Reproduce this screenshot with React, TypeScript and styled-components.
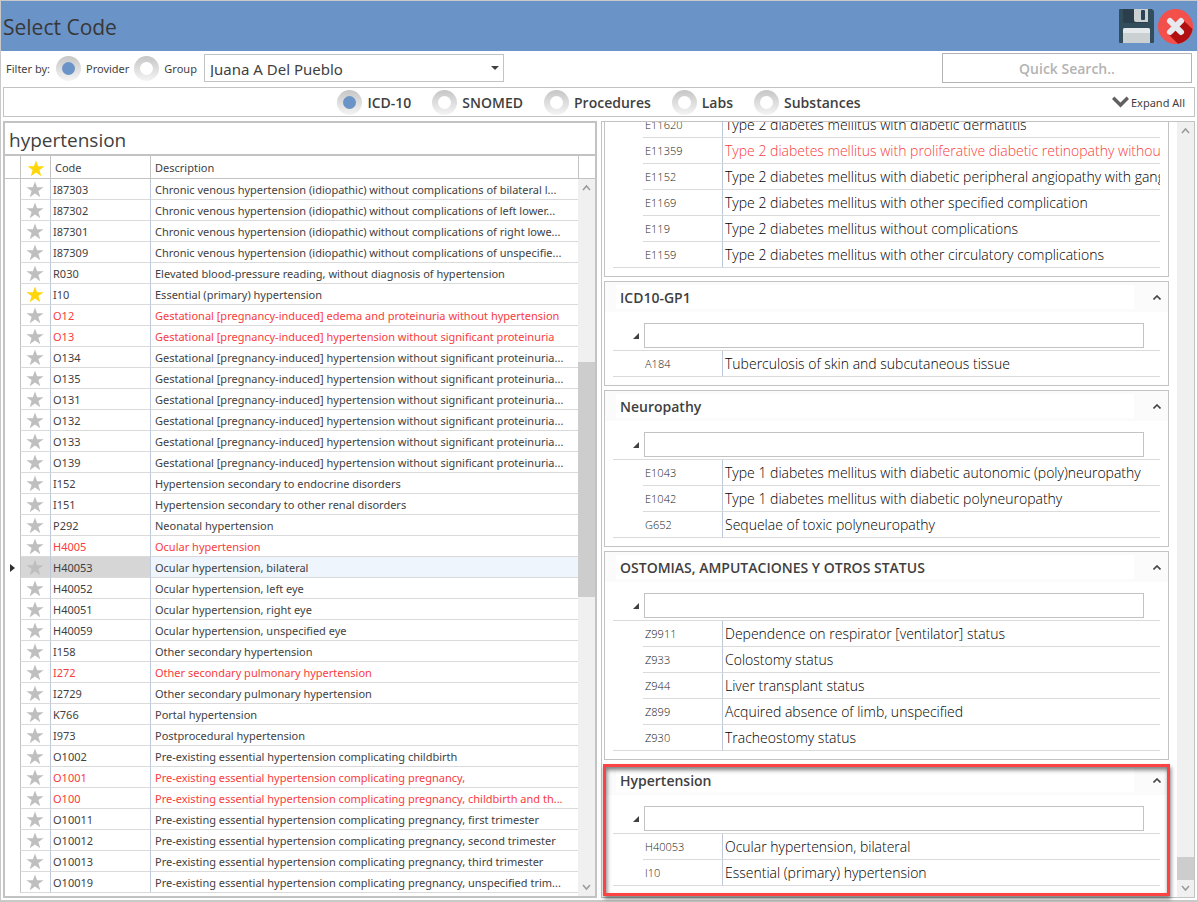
import React, { useState } from 'react';
import styled, { createGlobalStyle, css } from 'styled-components';

const color = {
  blue: '#6a93c7',
  line: '#c3c3c3',
  rowLine: '#dadada',
  colLine: '#bdc9da',
  text: '#3f3f3f',
  red: '#f83c3c',
  track: '#f0f0f0',
  thumb: '#cdcdcd',
};

const displayFont = "'Open Sans', 'Noto Sans', sans-serif";

const GlobalStyle = createGlobalStyle`
  *, *::before, *::after { box-sizing: border-box; }
  body {
    margin: 0;
    background: #fff;
    color: ${color.text};
    font-family: 'Noto Sans', 'Open Sans', sans-serif;
    font-size: 11px;
    line-height: 16px;
  }
  button, input, select { font: inherit; color: inherit; }
`;

const Window = styled.div`
  display: flex;
  flex-direction: column;
  height: 100vh;
  min-width: 900px;
  border: 1px solid #c9c9c9;
  border-bottom-width: 2px;
`;

const TitleBar = styled.header`
  display: flex;
  flex: none;
  align-items: center;
  justify-content: space-between;
  height: 50px;
  padding: 0 4px 0 2px;
  background: ${color.blue};
`;

const Title = styled.h1`
  margin: 0;
  padding-top: 2px;
  font-family: ${displayFont};
  font-size: 21px;
  font-weight: 400;
  line-height: 30px;
  color: #383838;
`;

const Actions = styled.div`
  display: flex;
  gap: 4px;
`;

const IconButton = styled.button`
  display: flex;
  padding: 0;
  border: 0;
  background: none;
  cursor: pointer;
`;

const Content = styled.main`
  display: flex;
  flex: 1;
  flex-direction: column;
  min-height: 0;
  padding: 0 2px 2px;
`;

const FilterRow = styled.div`
  display: flex;
  flex: none;
  align-items: center;
  height: 34px;
  margin-bottom: 2px;
  padding: 0 3px;
`;

const Caption = styled.span`
  padding-top: 2px;
`;

const FilterLabel = styled(Caption)`
  width: 50px;
`;

const RadioLabel = styled.label<{ $large?: boolean }>`
  display: flex;
  align-items: center;
  gap: 5px;
  ${(p) =>
    p.$large
      ? css`
          font-family: ${displayFont};
          font-size: 14px;
          font-weight: 600;
          line-height: 20px;
        `
      : css`
          margin-right: 5px;
        `}
`;

const Radio = styled.input.attrs({ type: 'radio' })`
  appearance: none;
  display: grid;
  place-items: center;
  width: 25px;
  height: 25px;
  margin: 0;
  border-radius: 50%;
  background: linear-gradient(#c6c6c6, #f4f4f4);

  &::before {
    content: '';
    width: 13px;
    height: 13px;
    border-radius: 50%;
    background: #fff;
  }
  &:checked::before { background: ${color.blue}; }
`;

const SelectWrap = styled.div`
  position: relative;
  width: 300px;
  margin-left: 2px;

  svg {
    position: absolute;
    top: 12px;
    right: 5px;
    pointer-events: none;
  }
`;

const ProviderSelect = styled.select`
  appearance: none;
  width: 100%;
  height: 28px;
  padding: 2px 20px 0 5px;
  border: 1px solid ${color.line};
  border-radius: 0;
  background: #fff;
  font-size: 15px;
`;

const QuickSearch = styled.input`
  width: 250px;
  height: 30px;
  margin-left: auto;
  border: 1px solid #b4b4b4;
  font-family: ${displayFont};
  font-size: 14px;
  font-weight: 600;
  text-align: center;

  &::placeholder { color: #b3b3b3; opacity: 1; }
`;

const CodeSetBar = styled.div`
  display: grid;
  flex: none;
  grid-template-columns: 1fr auto 1fr;
  align-items: center;
  height: 30px;
  border: 1px solid ${color.line};
`;

const CodeSets = styled.div`
  display: flex;
  grid-column: 2;
  gap: 21px;
`;

const ExpandAll = styled.button`
  display: flex;
  align-items: center;
  justify-self: end;
  gap: 2px;
  padding: 0 9px 0 0;
  border: 0;
  background: none;
`;

const Panes = styled.div`
  display: grid;
  flex: 1;
  grid-template-columns: minmax(0, 1fr) minmax(0, 1fr);
  grid-template-rows: minmax(0, 1fr);
  gap: 4px;
  min-height: 0;
  margin-top: 4px;
`;

const ResultsPane = styled.section`
  display: flex;
  flex-direction: column;
  min-height: 0;
  border: 2px solid ${color.line};
`;

const SearchBox = styled.input`
  flex: none;
  width: 100%;
  height: 33px;
  padding: 2px 4px 0;
  border: 0;
  border-bottom: 2px solid ${color.line};
  font-family: ${displayFont};
  font-size: 19px;
`;

const ResultsBody = styled.div`
  display: grid;
  flex: 1;
  grid-template-columns: minmax(0, 1fr) 17px;
  grid-template-rows: minmax(0, 1fr);
  min-height: 0;
`;

const TableClip = styled.div`
  overflow: hidden;
`;

const CodeTable = styled.table`
  width: 100%;
  border-spacing: 0;
  table-layout: fixed;
`;

const HeadCell = styled.th<{ $w?: number }>`
  width: ${(p) => (p.$w ? `${p.$w}px` : 'auto')};
  height: 23px;
  padding: 2px 4px 0;
  border-bottom: 1px solid ${color.line};
  border-left: ${(p) => (p.$w === 15 ? '0' : `1px solid ${color.line}`)};
  font-weight: 400;
  text-align: left;

  svg { display: block; margin-left: 2px; }
`;

const Corner = styled.div`
  height: 23px;
  border-bottom: 1px solid ${color.line};
  border-left: 1px solid ${color.line};
`;

const Cell = styled.td`
  height: 21px;
  overflow: hidden;
  padding: 2px 2px 0;
  border-bottom: 1px solid ${color.rowLine};
  border-left: 1px solid ${color.colLine};
  text-overflow: ellipsis;
  white-space: nowrap;

  svg { display: block; }
`;

const MarkerCell = styled(Cell)`
  padding: 0 0 0 5px;
  border: 0;
`;

const StarCell = styled(Cell)`
  padding: 0 0 0 5px;
  border-left-color: ${color.line};
`;

const DescriptionCell = styled(Cell)`
  padding: 2px 4px 0;
`;

const ResultRow = styled.tr<{ $red?: boolean; $selected?: boolean }>`
  color: ${(p) => (p.$red ? color.red : 'inherit')};
  ${(p) =>
    p.$selected &&
    css`
      ${Cell} { background: #d6d6d6; }
      ${DescriptionCell} { background: #eef5fc; }
      ${MarkerCell} { background: none; }
    `}
`;

const ScrollColumn = styled.div`
  display: flex;
  flex-direction: column;
`;

const Track = styled.div`
  display: flex;
  flex: 1;
  flex-direction: column;
  align-items: center;
  min-height: 0;
  background: ${color.track};
`;

const ScrollButton = styled.button`
  display: grid;
  flex: none;
  place-items: center;
  width: 17px;
  height: 17px;
  padding: 0;
  border: 0;
  background: none;
`;

const Spacer = styled.div<{ $grow: number }>`
  flex: ${(p) => p.$grow} 1 0;
`;

const Thumb = styled(Spacer)`
  width: 17px;
  background: ${color.thumb};
`;

const FavoritesPane = styled.section`
  display: grid;
  grid-template-columns: minmax(0, 1fr) 17px;
  grid-template-rows: minmax(0, 1fr);
  min-height: 0;
  border: 1px solid ${color.line};
`;

const CardList = styled.div`
  display: flex;
  flex-direction: column;
  justify-content: flex-end;
  gap: 4px;
  min-height: 0;
  padding: 0 8px 2px 2px;
  clip-path: inset(0 -4px -8px -4px);
`;

const Card = styled.article<{ $marked?: boolean }>`
  position: relative;
  flex: none;
  padding-bottom: 8px;
  border: 1px solid ${color.line};

  ${(p) =>
    p.$marked &&
    css`
      &::after {
        content: '';
        position: absolute;
        inset: -1px -2px -2px;
        border: 3px solid #fc4242;
        box-shadow: 1px 3px 4px rgba(0, 0, 0, 0.5), inset 1px 3px 4px rgba(0, 0, 0, 0.5);
        pointer-events: none;
      }
    `}
`;

const CardHeader = styled.div`
  display: grid;
  grid-template-columns: minmax(0, 1fr) 34px;
  align-items: center;
  height: 30px;
  padding-left: 11px;
  background: #fbfbfb;
`;

const CardTitle = styled.h2`
  margin: 0;
  padding: 3px 4px 1px;
  background: #fff;
  font-family: ${displayFont};
  font-size: 14px;
  font-weight: 600;
  line-height: 20px;
`;

const Collapse = styled(IconButton)`
  justify-self: end;
  padding-right: 7px;
`;

const CardSearch = styled.div`
  display: flex;
  align-items: center;
  gap: 5px;
  margin: 11px 24px 2px 28px;

  input {
    flex: 1;
    min-width: 0;
    height: 25px;
    border: 1px solid ${color.line};
  }
`;

const CardTableWrap = styled.div`
  margin: 0 8px;
  overflow: hidden;
  border-top: 1px solid ${color.rowLine};
`;

const CardRow = styled.tr<{ $red?: boolean }>`
  color: ${(p) => (p.$red ? color.red : '#000')};
`;

const IndentCell = styled.td`
  width: 30px;
  padding: 0;

  ${CardRow}:last-child & { border-bottom: 1px solid ${color.rowLine}; }
`;

const FavCode = styled.td`
  width: 79px;
  height: 26px;
  padding: 1px 2px 0;
  border-bottom: 1px solid ${color.rowLine};
  color: #222;
  font-family: ${displayFont};
  font-weight: 300;
`;

const FavText = styled.td`
  overflow: hidden;
  padding: 0 0 0 2px;
  border-bottom: 1px solid ${color.rowLine};
  border-left: 1px solid ${color.colLine};
  font-family: ${displayFont};
  font-size: 14px;
  font-weight: 300;
  line-height: 20px;
  white-space: nowrap;
`;

type Result = { code: string; text: string; red?: boolean; fav?: boolean };

const results: Result[] = [
  { code: 'I87303', text: 'Chronic venous hypertension (idiopathic) without complications of bilateral l...' },
  { code: 'I87302', text: 'Chronic venous hypertension (idiopathic) without complications of left lower...' },
  { code: 'I87301', text: 'Chronic venous hypertension (idiopathic) without complications of right lowe...' },
  { code: 'I87309', text: 'Chronic venous hypertension (idiopathic) without complications of unspecifie...' },
  { code: 'R030', text: 'Elevated blood-pressure reading, without diagnosis of hypertension' },
  { code: 'I10', text: 'Essential (primary) hypertension', fav: true },
  { code: 'O12', text: 'Gestational [pregnancy-induced] edema and proteinuria without hypertension', red: true },
  { code: 'O13', text: 'Gestational [pregnancy-induced] hypertension without significant proteinuria', red: true },
  { code: 'O134', text: 'Gestational [pregnancy-induced] hypertension without significant proteinuria...' },
  { code: 'O135', text: 'Gestational [pregnancy-induced] hypertension without significant proteinuria...' },
  { code: 'O131', text: 'Gestational [pregnancy-induced] hypertension without significant proteinuria...' },
  { code: 'O132', text: 'Gestational [pregnancy-induced] hypertension without significant proteinuria...' },
  { code: 'O133', text: 'Gestational [pregnancy-induced] hypertension without significant proteinuria...' },
  { code: 'O139', text: 'Gestational [pregnancy-induced] hypertension without significant proteinuria...' },
  { code: 'I152', text: 'Hypertension secondary to endocrine disorders' },
  { code: 'I151', text: 'Hypertension secondary to other renal disorders' },
  { code: 'P292', text: 'Neonatal hypertension' },
  { code: 'H4005', text: 'Ocular hypertension', red: true },
  { code: 'H40053', text: 'Ocular hypertension, bilateral' },
  { code: 'H40052', text: 'Ocular hypertension, left eye' },
  { code: 'H40051', text: 'Ocular hypertension, right eye' },
  { code: 'H40059', text: 'Ocular hypertension, unspecified eye' },
  { code: 'I158', text: 'Other secondary hypertension' },
  { code: 'I272', text: 'Other secondary pulmonary hypertension', red: true },
  { code: 'I2729', text: 'Other secondary pulmonary hypertension' },
  { code: 'K766', text: 'Portal hypertension' },
  { code: 'I973', text: 'Postprocedural hypertension' },
  { code: 'O1002', text: 'Pre-existing essential hypertension complicating childbirth' },
  { code: 'O1001', text: 'Pre-existing essential hypertension complicating pregnancy,', red: true },
  { code: 'O100', text: 'Pre-existing essential hypertension complicating pregnancy, childbirth and th...', red: true },
  { code: 'O10011', text: 'Pre-existing essential hypertension complicating pregnancy, first trimester' },
  { code: 'O10012', text: 'Pre-existing essential hypertension complicating pregnancy, second trimester' },
  { code: 'O10013', text: 'Pre-existing essential hypertension complicating pregnancy, third trimester' },
  { code: 'O10019', text: 'Pre-existing essential hypertension complicating pregnancy, unspecified trim...' },
];

type Group = { name: string; marked?: boolean; rows: Result[] };

const groups: Group[] = [
  {
    name: 'Diabetes',
    rows: [
      { code: 'E11620', text: 'Type 2 diabetes mellitus with diabetic dermatitis' },
      { code: 'E11359', text: 'Type 2 diabetes mellitus with proliferative diabetic retinopathy without', red: true },
      { code: 'E1152', text: 'Type 2 diabetes mellitus with diabetic peripheral angiopathy with gangrene' },
      { code: 'E1169', text: 'Type 2 diabetes mellitus with other specified complication' },
      { code: 'E119', text: 'Type 2 diabetes mellitus without complications' },
      { code: 'E1159', text: 'Type 2 diabetes mellitus with other circulatory complications' },
    ],
  },
  { name: 'ICD10-GP1', rows: [{ code: 'A184', text: 'Tuberculosis of skin and subcutaneous tissue' }] },
  {
    name: 'Neuropathy',
    rows: [
      { code: 'E1043', text: 'Type 1 diabetes mellitus with diabetic autonomic (poly)neuropathy' },
      { code: 'E1042', text: 'Type 1 diabetes mellitus with diabetic polyneuropathy' },
      { code: 'G652', text: 'Sequelae of toxic polyneuropathy' },
    ],
  },
  {
    name: 'OSTOMIAS, AMPUTACIONES Y OTROS STATUS',
    rows: [
      { code: 'Z9911', text: 'Dependence on respirator [ventilator] status' },
      { code: 'Z933', text: 'Colostomy status' },
      { code: 'Z944', text: 'Liver transplant status' },
      { code: 'Z899', text: 'Acquired absence of limb, unspecified' },
      { code: 'Z930', text: 'Tracheostomy status' },
    ],
  },
  {
    name: 'Hypertension',
    marked: true,
    rows: [
      { code: 'H40053', text: 'Ocular hypertension, bilateral' },
      { code: 'I10', text: 'Essential (primary) hypertension' },
    ],
  },
];

const codeSets = ['ICD-10', 'SNOMED', 'Procedures', 'Labs', 'Substances'];

const SaveIcon = () => (
  <svg width="35" height="34" viewBox="0 0 35 34" aria-hidden="true">
    <path d="M0 1Q0 0 1 0H33L35 2V33Q35 34 34 34H1Q0 34 0 33Z" fill="#324d5b" />
    <path d="M4 0H29V12Q29 14 27 14H6Q4 14 4 12Z" fill="#2b3e4c" />
    <path d="M15 0H29V13H17Q15 13 15 11Z" fill="#cbd0d3" />
    <rect x="22" y="1" width="4" height="10" rx="1" fill="#2b4254" />
    <path d="M4 21Q4 19 6 19H29Q31 19 31 21V34H4Z" fill="#cbd0d3" />
    <path d="M4 24V21Q4 19 6 19H29Q31 19 31 21V24Z" fill="#e6e9eb" />
  </svg>
);

const CloseIcon = () => (
  <svg width="35" height="35" viewBox="0 0 35 35" aria-hidden="true">
    <circle cx="17.5" cy="17.5" r="17.5" fill="#f4504b" />
    <path d="M24 10L34.5 20A17.5 17.5 0 0 1 20 34.8L10 25Z" fill="#b01012" />
    <path d="M12 12L23 23M23 12L12 23" stroke="#e6e9ee" strokeWidth="6" strokeLinecap="round" />
  </svg>
);

const Star = ({ fav }: { fav?: boolean }) => (
  <svg width="18" height="17" viewBox="0 0 18 17" aria-hidden="true">
    <path
      d="M9 0.500L11.100 6.300H17.600L12.400 10.100L14.300 16.200L9 12.500L3.700 16.200L5.600 10.100L0.400 6.300H6.900Z"
      fill={fav ? '#ffd60a' : '#bfbfbf'}
    />
  </svg>
);

const Caret = ({ down }: { down?: boolean }) => (
  <svg width="9" height="7" viewBox="0 0 9 7" aria-hidden="true">
    <path d={down ? 'M1 1L4.500 5L8 1' : 'M1 6L4.500 2L8 6'} fill="none" stroke="#9a9a9a" strokeWidth="1.500" />
  </svg>
);

type ScrollProps = { before: number; size: number; after: number };

const Scrollbar = ({ before, size, after }: ScrollProps) => (
  <Track>
    <ScrollButton aria-label="Scroll up"><Caret /></ScrollButton>
    <Spacer $grow={before} />
    <Thumb $grow={size} />
    <Spacer $grow={after} />
    <ScrollButton aria-label="Scroll down"><Caret down /></ScrollButton>
  </Track>
);

const FavoriteCard = ({ name, marked, rows }: Group) => (
  <Card $marked={marked}>
    <CardHeader>
      <CardTitle>{name}</CardTitle>
      <Collapse aria-label={`Collapse ${name}`}>
        <svg width="8" height="5" viewBox="0 0 8 5" aria-hidden="true">
          <path d="M0.500 4.500L4 1L7.500 4.500" fill="none" stroke="#444" strokeWidth="1.600" />
        </svg>
      </Collapse>
    </CardHeader>
    <CardSearch>
      <svg width="6" height="6" viewBox="0 0 6 6" aria-hidden="true">
        <path d="M6 0V6H0Z" fill="#404040" />
      </svg>
      <input type="text" aria-label={`Filter ${name}`} />
    </CardSearch>
    <CardTableWrap>
      <CodeTable>
        <tbody>
          {rows.map((r) => (
            <CardRow key={r.code} $red={r.red}>
              <IndentCell />
              <FavCode>{r.code}</FavCode>
              <FavText>{r.text}</FavText>
            </CardRow>
          ))}
        </tbody>
      </CodeTable>
    </CardTableWrap>
  </Card>
);

export default function App() {
  const [owner, setOwner] = useState('Provider');
  const [codeSet, setCodeSet] = useState('ICD-10');
  const [selected, setSelected] = useState('H40053');

  return (
    <>
      <GlobalStyle />
      <Window>
        <TitleBar>
          <Title>Select Code</Title>
          <Actions>
            <IconButton aria-label="Save"><SaveIcon /></IconButton>
            <IconButton aria-label="Close"><CloseIcon /></IconButton>
          </Actions>
        </TitleBar>
        <Content>
          <FilterRow>
            <FilterLabel>Filter by:</FilterLabel>
            {['Provider', 'Group'].map((o) => (
              <RadioLabel key={o}>
                <Radio name="owner" checked={owner === o} onChange={() => setOwner(o)} />
                <Caption>{o}</Caption>
              </RadioLabel>
            ))}
            <SelectWrap>
              <ProviderSelect aria-label="Provider">
                <option>Juana A Del Pueblo</option>
              </ProviderSelect>
              <svg width="8" height="4" viewBox="0 0 8 4" aria-hidden="true">
                <path d="M0 0H8L4 4Z" fill="#404040" />
              </svg>
            </SelectWrap>
            <QuickSearch type="text" aria-label="Quick search" placeholder="Quick Search.." />
          </FilterRow>
          <CodeSetBar>
            <CodeSets>
              {codeSets.map((c) => (
                <RadioLabel key={c} $large>
                  <Radio name="codeset" checked={codeSet === c} onChange={() => setCodeSet(c)} />
                  <Caption>{c}</Caption>
                </RadioLabel>
              ))}
            </CodeSets>
            <ExpandAll>
              <svg width="17" height="12" viewBox="0 0 17 12" aria-hidden="true">
                <path d="M1.200 1.700L8.500 9L15.800 1.700" fill="none" stroke="#606060" strokeWidth="3.400" />
              </svg>
              <Caption>Expand All</Caption>
            </ExpandAll>
          </CodeSetBar>
          <Panes>
            <ResultsPane>
              <SearchBox type="text" aria-label="Search codes" defaultValue="hypertension" />
              <ResultsBody>
                <TableClip>
                  <CodeTable>
                    <thead>
                      <tr>
                        <HeadCell $w={15} aria-label="Current row" />
                        <HeadCell $w={30} aria-label="Favorite"><Star fav /></HeadCell>
                        <HeadCell $w={100}>Code</HeadCell>
                        <HeadCell>Description</HeadCell>
                      </tr>
                    </thead>
                    <tbody>
                      {results.map((r) => (
                        <ResultRow
                          key={r.code}
                          $red={r.red}
                          $selected={r.code === selected}
                          onClick={() => setSelected(r.code)}
                        >
                          <MarkerCell>
                            {r.code === selected && (
                              <svg width="5" height="8" viewBox="0 0 5 8" aria-hidden="true">
                                <path d="M0 0L5 4L0 8Z" fill="#303030" />
                              </svg>
                            )}
                          </MarkerCell>
                          <StarCell><Star fav={r.fav} /></StarCell>
                          <Cell>{r.code}</Cell>
                          <DescriptionCell>{r.text}</DescriptionCell>
                        </ResultRow>
                      ))}
                    </tbody>
                  </CodeTable>
                </TableClip>
                <ScrollColumn>
                  <Corner />
                  <Scrollbar before={166} size={235} after={282} />
                </ScrollColumn>
              </ResultsBody>
            </ResultsPane>
            <FavoritesPane>
              <CardList>
                {groups.map((g) => (
                  <FavoriteCard key={g.name} {...g} />
                ))}
              </CardList>
              <Scrollbar before={718} size={23} after={0} />
            </FavoritesPane>
          </Panes>
        </Content>
      </Window>
    </>
  );
}
